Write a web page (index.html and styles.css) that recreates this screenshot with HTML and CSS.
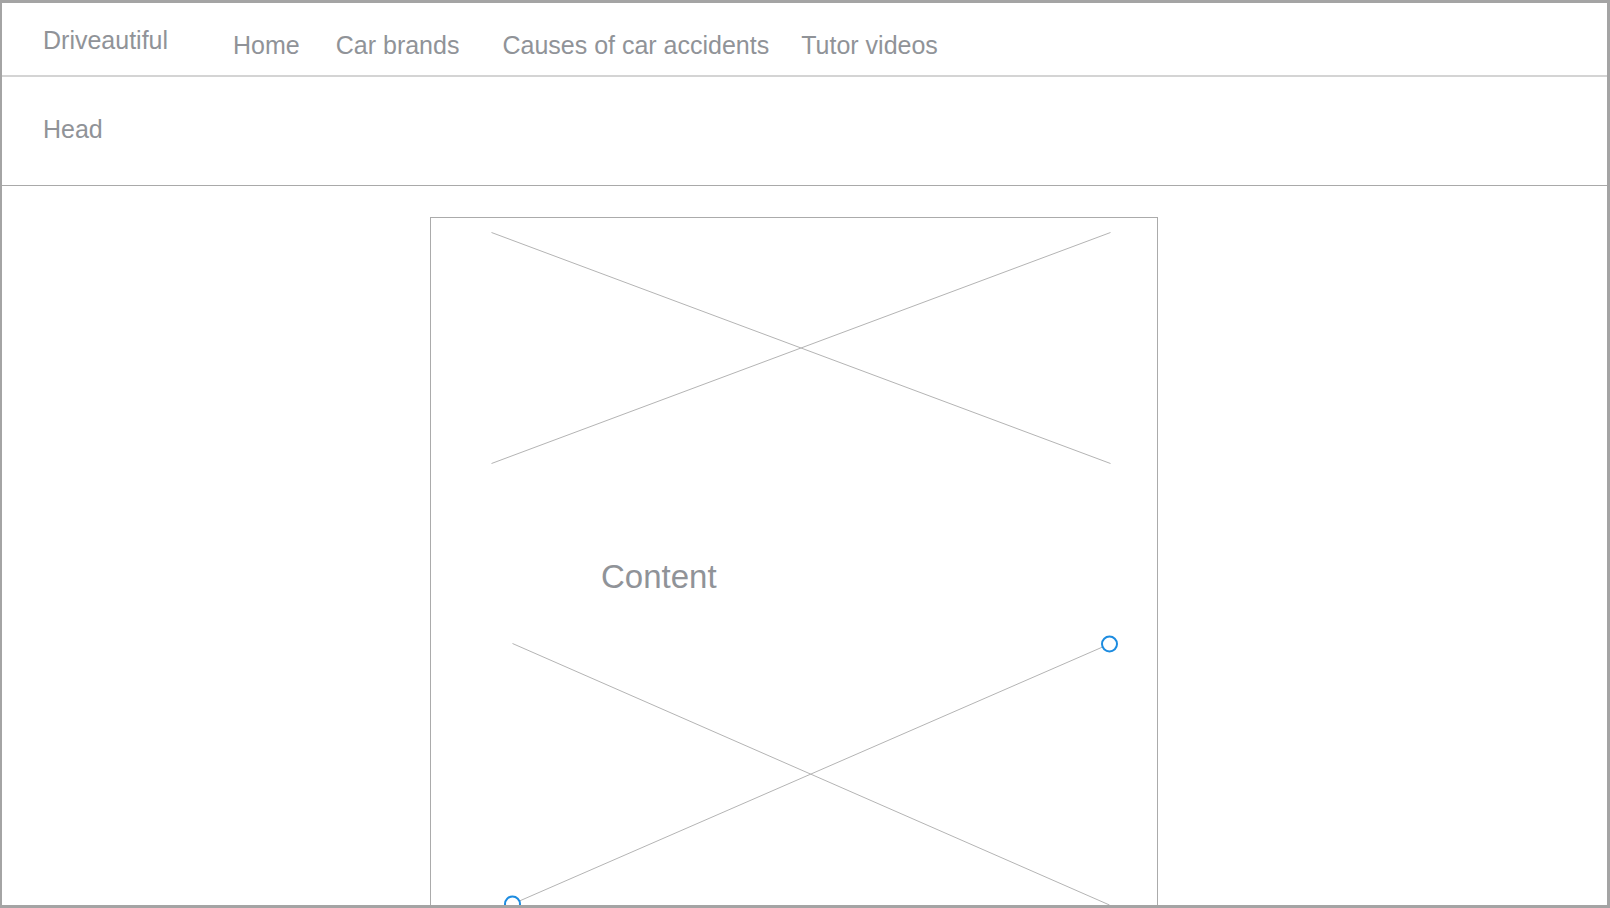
FILE: index.html
```html
<!DOCTYPE html>
<html lang="en">
<head>
<meta charset="utf-8">
<title>Driveautiful</title>
<link rel="stylesheet" href="styles.css">
</head>
<body>
<div class="frame">
  <nav class="nav">
    <span class="brand">Driveautiful</span>
    <a class="link link-home" href="#">Home</a>
    <a class="link link-brands" href="#">Car brands</a>
    <a class="link link-causes" href="#">Causes of car accidents</a>
    <a class="link link-videos" href="#">Tutor videos</a>
  </nav>
  <header class="head">
    <span class="head-title">Head</span>
  </header>
  <main class="main">
    <section class="content-box">
      <svg class="ph ph-top" width="620" height="232" viewBox="0 0 620 232">
        <line x1="0.5" y1="0.5" x2="619.5" y2="231.5"/>
        <line x1="0.5" y1="231.5" x2="619.5" y2="0.5"/>
      </svg>
      <p class="content-label">Content</p>
      <svg class="ph ph-bottom" width="598" height="262" viewBox="0 0 598 262">
        <line x1="0.5" y1="0.5" x2="597.5" y2="262"/>
        <line x1="0.5" y1="261" x2="597.5" y2="1"/>
        <circle class="handle" cx="0.5" cy="261" r="7.5"/>
        <circle class="handle" cx="597.5" cy="1" r="7.5"/>
      </svg>
    </section>
  </main>
</div>
</body>
</html>
```

FILE: styles.css
```css
html, body {
  margin: 0;
  padding: 0;
  background: #ffffff;
}

body {
  font-family: "Liberation Sans", Arial, sans-serif;
  color: #909398;
}

.frame {
  width: 1610px;
  height: 908px;
  box-sizing: border-box;
  border-style: solid;
  border-color: #a4a4a4;
  border-width: 3px 3px 3px 2px;
  display: flex;
  flex-direction: column;
  overflow: hidden;
  background: #ffffff;
}

.nav {
  height: 74px;
  box-sizing: border-box;
  border-bottom: 2px solid #d4d4d4;
  display: flex;
  align-items: flex-start;
  padding: 22px 0 0 41px;
  flex: none;
}

.brand {
  font-size: 25px;
  line-height: 30px;
}

.link {
  font-size: 25px;
  line-height: 30px;
  color: #909398;
  text-decoration: none;
  margin-top: 5px;
}

.link-home { margin-left: 65px; }
.link-brands { margin-left: 36px; }
.link-causes { margin-left: 43px; }
.link-videos { margin-left: 32px; }

.head {
  height: 109px;
  box-sizing: border-box;
  border-bottom: 1px solid #a9a9a9;
  padding: 37px 0 0 41px;
  flex: none;
}

.head-title {
  font-size: 25px;
  line-height: 30px;
}

.main {
  flex: 1;
  overflow: hidden;
  padding: 31px 0 0 428px;
}

.content-box {
  width: 728px;
  height: 720px;
  box-sizing: border-box;
  border: 1px solid #ababab;
  padding: 14px 0 0 0;
}

.ph {
  display: block;
  overflow: visible;
}

.ph line {
  stroke: #b4b4b4;
  stroke-width: 1;
}

.ph-top {
  margin-left: 60px;
}

.content-label {
  margin: 94px 0 0 170px;
  font-size: 33px;
  line-height: 38px;
}

.ph-bottom {
  margin: 47px 0 0 81px;
}

.handle {
  fill: #ffffff;
  stroke: #1d8ce0;
  stroke-width: 2;
}
```
